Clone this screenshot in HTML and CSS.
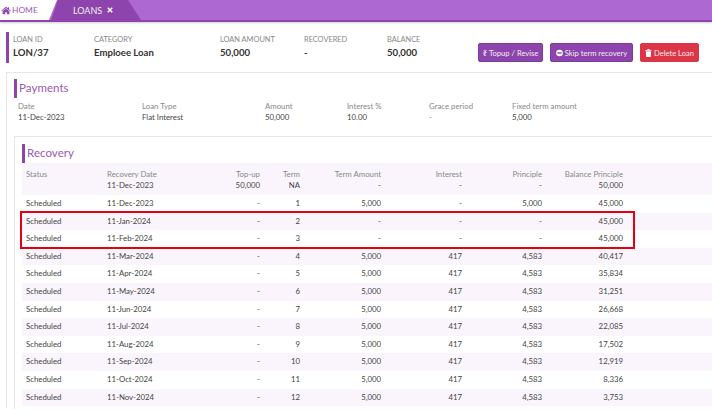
FILE: index.html
```html
<!DOCTYPE html>
<html lang="en">
<head>
<meta charset="utf-8">
<title>Loans</title>
<link rel="stylesheet" href="styles.css">
</head>
<body>
<nav class="tabs">
  <a class="tab-home"><svg class="home-icon" viewBox="0 0 12 10"><path d="M6 0.6 0.3 5.3l.6.7L6 1.9 11.1 6l.6-.7-2.1-1.7V1H8.2v1.4zM2 6v3.6h3V7h2v2.6h3V6L6 2.7z"/></svg>HOME</a>
  <a class="tab-loans">LOANS <svg class="close-icon" viewBox="0 0 8 8"><path d="M1 1l6 6M7 1 1 7"/></svg></a>
</nav>
<header class="summary">
  <div class="info">
    <div class="info-item w-id"><span>LOAN ID</span><b>LON/37</b></div>
    <div class="info-item w-cat"><span>CATEGORY</span><b>Emploee Loan</b></div>
    <div class="info-item w-amt"><span>LOAN AMOUNT</span><b>50,000</b></div>
    <div class="info-item w-rec"><span>RECOVERED</span><b>-</b></div>
    <div class="info-item"><span>BALANCE</span><b>50,000</b></div>
  </div>
  <div class="actions">
    <button class="btn btn-topup"><span class="ico">₹</span>Topup / Revise</button>
    <button class="btn btn-skip"><svg class="btn-icon" viewBox="0 0 8 8"><circle cx="4" cy="4" r="3.8" fill="#fff"/><rect x="1.6" y="3.2" width="4.8" height="1.6" fill="#8e44ad"/></svg>Skip term recovery</button>
    <button class="btn btn-danger"><svg class="btn-icon" viewBox="0 0 8 9"><path d="M3 0h2l.5 1H7.6v1H.4V1h2.1zM1 2.6h6L6.6 9H1.4z" fill="#fff"/></svg>Delete Loan</button>
  </div>
</header>
<section class="panel payments">
  <h2 class="title">Payments</h2>
  <div class="facts">
    <div><span>Date</span><b>11-Dec-2023</b></div>
    <div><span>Loan Type</span><b>Flat Interest</b></div>
    <div><span>Amount</span><b>50,000</b></div>
    <div><span>Interest %</span><b>10.00</b></div>
    <div><span>Grace period</span><b class="dim">-</b></div>
    <div><span>Fixed term amount</span><b>5,000</b></div>
  </div>
  <section class="panel recovery">
    <h2 class="title">Recovery</h2>
    <div class="table-wrap">
      <table>
        <colgroup><col class="c1"><col class="c2"><col class="c3"><col class="c4"><col class="c5"><col class="c5"><col class="c6"><col class="c7"><col class="c8"></colgroup>
        <thead>
          <tr><th>Status</th><th>Recovery Date<b>11-Dec-2023</b></th><th class="n">Top-up<b>50,000</b></th><th class="n">Term<b>NA</b></th><th class="n">Term Amount<b>-</b></th><th class="n">Interest<b>-</b></th><th class="n">Principle<b>-</b></th><th class="n">Balance Principle<b>50,000</b></th><th></th></tr>
        </thead>
        <tbody>
          <tr><td>Scheduled</td><td>11-Dec-2023</td><td class="n">-</td><td class="n">1</td><td class="n">5,000</td><td class="n">-</td><td class="n">5,000</td><td class="n">45,000</td><td></td></tr>
          <tr><td>Scheduled</td><td>11-Jan-2024</td><td class="n">-</td><td class="n">2</td><td class="n">-</td><td class="n">-</td><td class="n">-</td><td class="n">45,000</td><td></td></tr>
          <tr><td>Scheduled</td><td>11-Feb-2024</td><td class="n">-</td><td class="n">3</td><td class="n">-</td><td class="n">-</td><td class="n">-</td><td class="n">45,000</td><td></td></tr>
          <tr><td>Scheduled</td><td>11-Mar-2024</td><td class="n">-</td><td class="n">4</td><td class="n">5,000</td><td class="n">417</td><td class="n">4,583</td><td class="n">40,417</td><td></td></tr>
          <tr><td>Scheduled</td><td>11-Apr-2024</td><td class="n">-</td><td class="n">5</td><td class="n">5,000</td><td class="n">417</td><td class="n">4,583</td><td class="n">35,834</td><td></td></tr>
          <tr><td>Scheduled</td><td>11-May-2024</td><td class="n">-</td><td class="n">6</td><td class="n">5,000</td><td class="n">417</td><td class="n">4,583</td><td class="n">31,251</td><td></td></tr>
          <tr><td>Scheduled</td><td>11-Jun-2024</td><td class="n">-</td><td class="n">7</td><td class="n">5,000</td><td class="n">417</td><td class="n">4,583</td><td class="n">26,668</td><td></td></tr>
          <tr><td>Scheduled</td><td>11-Jul-2024</td><td class="n">-</td><td class="n">8</td><td class="n">5,000</td><td class="n">417</td><td class="n">4,583</td><td class="n">22,085</td><td></td></tr>
          <tr><td>Scheduled</td><td>11-Aug-2024</td><td class="n">-</td><td class="n">9</td><td class="n">5,000</td><td class="n">417</td><td class="n">4,583</td><td class="n">17,502</td><td></td></tr>
          <tr><td>Scheduled</td><td>11-Sep-2024</td><td class="n">-</td><td class="n">10</td><td class="n">5,000</td><td class="n">417</td><td class="n">4,583</td><td class="n">12,919</td><td></td></tr>
          <tr><td>Scheduled</td><td>11-Oct-2024</td><td class="n">-</td><td class="n">11</td><td class="n">5,000</td><td class="n">417</td><td class="n">4,583</td><td class="n">8,336</td><td></td></tr>
          <tr><td>Scheduled</td><td>11-Nov-2024</td><td class="n">-</td><td class="n">12</td><td class="n">5,000</td><td class="n">417</td><td class="n">4,583</td><td class="n">3,753</td><td></td></tr>
        </tbody>
      </table>
      <div class="highlight"></div>
    </div>
  </section>
</section>
</body>
</html>
```
FILE: styles.css
```css
* { box-sizing: border-box; }
html, body { height: 415px; overflow: hidden; }
body { margin: 0; background: #fff; color: #444; font-family: Lato, "Noto Sans", sans-serif; font-size: 7.8px; line-height: 11px; }

.tabs { display: flex; height: 22px; background: #ae68d2; border-bottom: 2px solid #8e44ad; box-shadow: 0 1px 2px rgba(0,0,0,.2); }
.tab-home { display: flex; align-items: center; gap: 1px; width: 57px; padding-left: 1px; height: 20px; background: #fff; color: #9b59b6; font-size: 8.4px; clip-path: polygon(0 0, 57px 0, 49px 20px, 0 20px); }
.home-icon { width: 10px; height: 9px; fill: #8e44ad; }
.tab-loans { display: flex; align-items: center; gap: 5px; width: 90px; height: 20px; margin-left: -6px; padding-left: 22px; background: #8e44ad; color: #eee; font-size: 9px; clip-path: polygon(7px 0, 77px 0, 90px 20px, 0 20px); }
.close-icon { width: 6px; height: 6px; stroke: #fff; stroke-width: 2; fill: none; }

.summary { display: flex; justify-content: space-between; align-items: center; height: 50px; padding: 0 13px 0 6px; }
.info { display: flex; height: 31px; border-left: 3px solid #8e44ad; padding-left: 4px; align-items: flex-start; padding-top: 2px; }
.info-item { display: flex; flex-direction: column; }
.info-item span { color: #888; font-size: 7.4px; line-height: 11px; }
.info-item b { color: #333; font-size: 9.6px; line-height: 15px; font-weight: 700; }
.w-id { width: 81px; }
.w-cat { width: 126px; }
.w-amt { width: 84px; }
.w-rec { width: 83px; }
.actions { display: flex; gap: 7px; margin-top: 11px; }
.btn { display: flex; align-items: center; justify-content: center; gap: 2px; height: 19px; padding: 0; border: 1px solid #7d3c98; border-radius: 2px; background: #8e44ad; color: #eee; font: 7.6px Lato, sans-serif; white-space: nowrap; }
.btn-topup { width: 65px; }
.btn-skip { width: 83px; }
.btn-danger { width: 59px; background: #dc3545; border-color: #dc3545; }
.ico { font-weight: 700; font-family: "Noto Sans", "DejaVu Sans", sans-serif; }
.btn-icon { width: 7px; height: 8px; }

.panel { border: 1px solid #e6e6e6; border-right: 0; border-bottom: 0; }
.payments { margin-left: 6px; height: 336px; padding: 6px 0 0 7px; }
.title { margin: 0; height: 19px; border-left: 3px solid #8e44ad; padding-left: 2px; color: #9b59b6; font-size: 11.6px; font-weight: 400; line-height: 18px; }
.facts { display: grid; grid-template-columns: 124px 123px 82px 82px 83px 1fr; margin: 3px 0 0 4px; height: 35px; }
.facts span { display: block; color: #888; line-height: 11px; }
.facts b { display: block; font-weight: 400; color: #444; line-height: 11px; }
.facts .dim { color: #888; }
.recovery { padding: 7px 0 0 7px; height: 273px; }
.table-wrap { position: relative; }
table { width: 690px; border-collapse: collapse; table-layout: fixed; }
.c1 { width: 81px; } .c2 { width: 87px; } .c3 { width: 74px; } .c4 { width: 40px; } .c5 { width: 81px; } .c6 { width: 80px; } .c7 { width: 81px; } .c8 { width: 85px; }
th, td { padding: 0 4px; text-align: left; font-weight: 400; vertical-align: top; white-space: nowrap; }
th { height: 32px; padding-top: 6px; color: #888; background: #faf5fc; }
th b { display: block; font-weight: 400; color: #444; }
td { height: 17.6px; line-height: 17px; color: #444; }
tbody tr:nth-child(even) td { background: #faf5fc; }
.n { text-align: right; }
.highlight { position: absolute; left: -2px; top: 48px; width: 615px; height: 38px; border: 2px solid #e6000f; }
```
